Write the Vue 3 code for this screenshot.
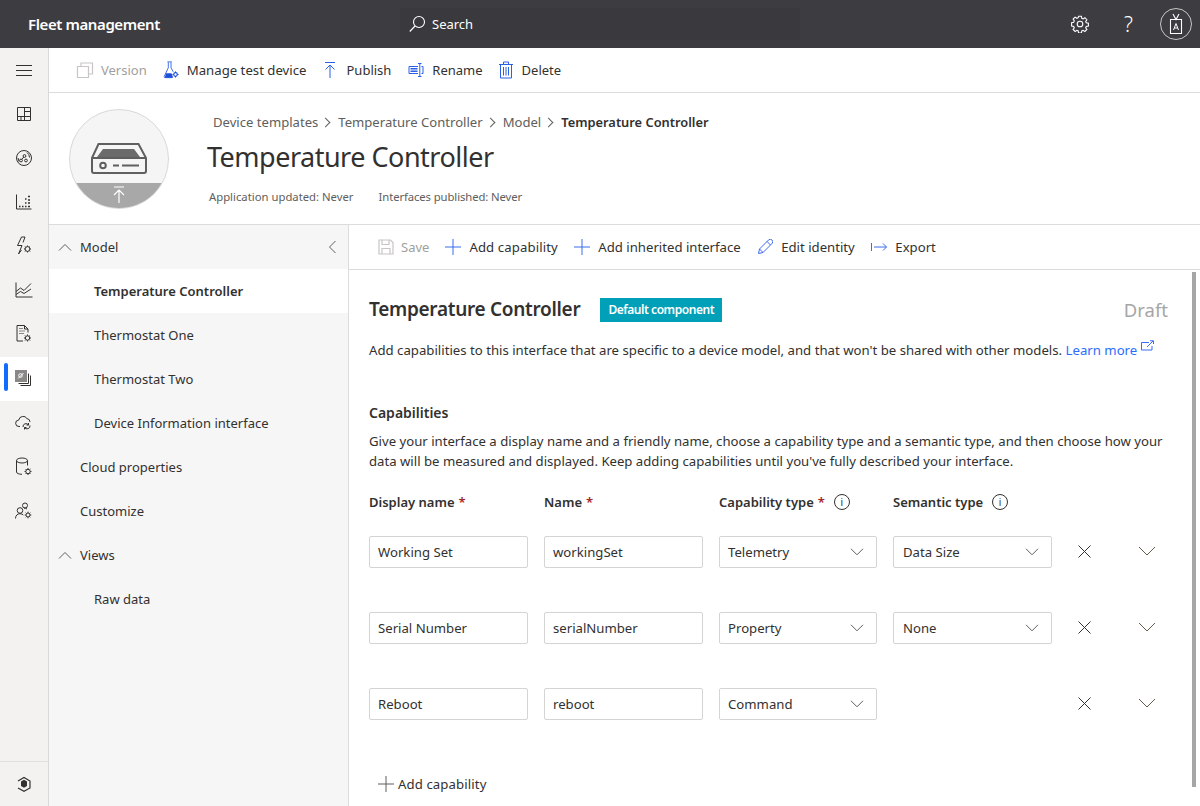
<script setup>
const navItems = [
  { label: 'Model', chev: true, cls: 'top', collapse: true },
  { label: 'Temperature Controller', cls: 'sub selected' },
  { label: 'Thermostat One', cls: 'sub' },
  { label: 'Thermostat Two', cls: 'sub' },
  { label: 'Device Information interface', cls: 'sub' },
  { label: 'Cloud properties', cls: 'top' },
  { label: 'Customize', cls: 'top' },
  { label: 'Views', chev: true, cls: 'top' },
  { label: 'Raw data', cls: 'sub' },
]
const rows = [
  { display: 'Working Set', name: 'workingSet', cap: 'Telemetry', sem: 'Data Size' },
  { display: 'Serial Number', name: 'serialNumber', cap: 'Property', sem: 'None' },
  { display: 'Reboot', name: 'reboot', cap: 'Command', sem: '' },
]
</script>

<template>
  <div class="app">
    <header class="topbar">
      <div class="brand">Fleet management</div>
      <div class="search">
        <svg width="20" height="20" viewBox="0 0 20 20" fill="none" stroke="#fff" stroke-width="1.100"><circle cx="10" cy="8" r="5.500"/><path d="M6 12 .8 17.500"/></svg>
        <span>Search</span>
      </div>
      <div class="top-actions">
        <svg class="gear" width="18" height="18" viewBox="0 0 18 18" fill="none" stroke="#fff" stroke-width="1.100"><path d="M7.600 1.200h2.800l.4 2.100 1.300.6 1.800-1.200 2 2-1.200 1.800.6 1.300 2.100.4v2.800l-2.100.4-.6 1.300 1.200 1.800-2 2-1.800-1.200-1.300.6-.4 2.100H7.600l-.4-2.100-1.300-.6-1.800 1.200-2-2 1.200-1.800-.6-1.300-2.100-.4V7.600l2.100-.4.6-1.300-1.200-1.800 2-2 1.800 1.200 1.300-.6z"/><circle cx="9" cy="9" r="2.800"/></svg>
        <span class="help">?</span>
        <div class="avatar">
          <svg width="16" height="22" viewBox="0 0 16 22" fill="none" stroke="#fff" stroke-width="1.100"><path d="M2.500 6.500h11v14h-11zM5 1l3 5.500L11 1"/><path d="M5.500 17 8 10.500 10.500 17M6.400 15h3.200" stroke-width="1"/></svg>
        </div>
      </div>
    </header>

    <div class="body">
      <aside class="rail">
        <div class="rail-top">
          <button class="rail-btn menu"><svg width="18" height="12" viewBox="0 0 18 12" stroke="#323130" stroke-width="1"><path d="M1 1.500h16M1 6.500h16M1 11.500h16"/></svg></button>
          <button class="rail-btn"><svg width="16" height="16" viewBox="0 0 16 16" fill="none" stroke="#323130"><path d="M1.500 1.500h13v13h-13zM1.500 10.500h13M8.500 1.500v13M8.500 5.500h6M5 10.500v4"/></svg></button>
          <button class="rail-btn"><svg width="18" height="18" viewBox="0 0 18 18" fill="none" stroke="#323130"><circle cx="9" cy="9" r="7.500"/><circle cx="6" cy="11.500" r="1.400"/><circle cx="9.500" cy="7" r="1.400"/><circle cx="11" cy="11.500" r="1.400"/><path d="M7 10.300 8.700 8M12 3.500a6 6 0 0 1 2.500 5M4 12.500 3 9"/></svg></button>
          <button class="rail-btn"><svg width="18" height="16" viewBox="0 0 18 16" fill="none" stroke="#323130"><path d="M1.500 .5v14.500h15"/><path d="M4 12.500h1.500M7 12.500h1.500M10 12.500h1.500M13 12.500h2M10 9h1.500M13 9h2M13 6h2M10 5h1.500M13 2.500h2" stroke-width="1.600"/></svg></button>
          <button class="rail-btn"><svg width="18" height="20" viewBox="0 0 18 20" fill="none" stroke="#323130"><path d="M6.500 1 2.500 9.500H7L3.500 18 6.500 14M6.500 1H10L8 6.500"/><circle cx="12.500" cy="13" r="2.400"/><path d="M12.500 9.500v1.200M12.500 15.300v1.200M9 13h1.200M14.800 13H16M10 10.500l.9.9M14.100 14.600l.9.900M10 15.500l.9-.9M14.100 11.400l.9-.9"/></svg></button>
          <button class="rail-btn"><svg width="18" height="16" viewBox="0 0 18 16" fill="none" stroke="#323130"><path d="M1 .5v14.500h16.500"/><path d="M1 9.500 5.500 6l3.500 2.500L16 1.500M1 12.500 5.500 9.500l3.500 2 7-4.500"/></svg></button>
          <button class="rail-btn"><svg width="18" height="20" viewBox="0 0 18 20" fill="none" stroke="#323130"><path d="M8 17H2V1.500h7.500L13 5v3.500M9.500 1.500V5H13"/><path d="M4 4.500h4M4 7h6M4 9.500h5" stroke="#8a8886"/><circle cx="12.500" cy="14" r="2.200"/><path d="M12.500 10.500v1.200M12.500 16.300v1.200M9 14h1.200M14.800 14H16M10 11.500l.9.9M14.100 15.600l.9.900M10 16.500l.9-.9M14.100 12.400l.9-.9"/></svg></button>
          <button class="rail-btn active"><span class="active-bar"></span><svg width="18" height="18" viewBox="0 0 18 18" fill="none" stroke="#323130"><rect x=".5" y=".5" width="11" height="11" fill="#8a8886" stroke="#8a8886"/><path d="M3 8.500 8.500 3" stroke="#fff"/><circle cx="5.500" cy="5.500" r="1.800" stroke="#fff"/><path d="M13.500 3.500v10h-10M15.500 5.500v10h-10"/></svg></button>
          <button class="rail-btn"><svg width="18" height="16" viewBox="0 0 18 16" fill="none" stroke="#323130"><path d="M5 11.500H4a3.200 3.200 0 0 1-.3-6.400A4.500 4.500 0 0 1 12 3.600a3.500 3.500 0 0 1 3 3.400"/><path d="M8 12a3 3 0 0 1 5.500-2M15 10.500a3 3 0 0 1-5.500 2M13.500 8v2h-2M9.500 14.500v-2h2"/></svg></button>
          <button class="rail-btn"><svg width="18" height="20" viewBox="0 0 18 20" fill="none" stroke="#323130"><ellipse cx="7" cy="3.500" rx="5.500" ry="2.500"/><path d="M1.500 3.500v11.500c0 1.300 2.500 2.300 5.500 2.300M12.500 3.500v5"/><circle cx="13" cy="14.500" r="2.200"/><path d="M13 11v1.200M13 16.800V18M9.500 14.500h1.200M15.300 14.500h1.200M10.500 12l.9.9M14.600 16.100l.9.9M10.500 17l.9-.9M14.600 12.900l.9-.9"/></svg></button>
          <button class="rail-btn"><svg width="18" height="18" viewBox="0 0 18 18" fill="none" stroke="#323130"><circle cx="10" cy="3.500" r="2.500"/><circle cx="5" cy="8.500" r="2.800"/><path d="M.500 16.500c0-3 2-4.800 4.500-4.800 1.500 0 2.500.5 3.300 1.300M12 7a4 4 0 0 0-3-.8"/><circle cx="13" cy="13" r="2"/><path d="M13 9.700v1.200M13 15.100v1.200M9.700 13h1.200M15.100 13h1.200M10.700 10.700l.8.800M14.500 14.500l.8.800M10.700 15.300l.8-.8M14.500 11.500l.8-.8"/></svg></button>
        </div>
        <div class="rail-bottom">
          <svg width="16" height="18" viewBox="0 0 16 18" fill="none" stroke="#323130" stroke-width="1.200"><path d="M2 6 8 2.500l6 3.500v7L8 16.300 2 13"/><path d="M5 6.500 8 4.800 11 6.500v4.500L8 12.800 5 11z" fill="#323130" stroke="none"/></svg>
        </div>
      </aside>

      <main class="main">
        <div class="cmdbar">
          <span class="cmd disabled">
            <svg width="18" height="18" viewBox="0 0 18 18" fill="none" stroke="#c8c6c4" stroke-width="1.200"><path d="M1.500 5.500h11v11h-11zM5 5.500V2h11.500v11H12.500"/></svg>Version
          </span>
          <span class="cmd wide">
            <svg width="16" height="18" viewBox="0 0 18 20" fill="none" stroke="#2b5fe8"><path d="M5 1h5M6 1.500v6L1.500 17c-.3.800 0 1.500 1 1.500H10M9 1.500v6l2.500 4.500" /><path d="M3.500 13.500h6l2 5H2z" fill="#1f4fd8" stroke="none"/><circle cx="14" cy="15" r="2" stroke="#1f4fd8" stroke-width="1.300"/><path d="M14 11.500v1.500M14 17v1.500M10.500 15H12M16 15h1.500" stroke="#1f4fd8"/></svg>Manage test device
          </span>
          <span class="cmd">
            <svg width="14" height="18" viewBox="0 0 14 18" fill="none" stroke="#2b5fe8"><path d="M2 1.500h10M7 17V4M2.500 8.500 7 4l4.500 4.500"/></svg>Publish
          </span>
          <span class="cmd rename">
            <svg width="16" height="14" viewBox="0 0 16 14" fill="none" stroke="#2b5fe8"><path d="M10 3.500H1v7h9M13.500 3.500H15v7h-1.500"/><path d="M2.500 5.500h7M2.500 7h7M2.500 8.500h7" stroke-width="1"/><path d="M10 .5h3.500M11.800 .5v13M10 13.500h3.500"/></svg>Rename
          </span>
          <span class="cmd">
            <svg width="16" height="18" viewBox="0 0 16 18" fill="none" stroke="#2b5fe8"><path d="M1 3.500h14M5.500 3.500V1h5v2.500M2.500 3.500V17h11V3.500M5.500 6v8.500M8 6v8.500M10.500 6v8.500"/></svg>Delete
          </span>
        </div>

        <div class="identity">
          <div class="badge-circle">
            <svg class="drive" width="56" height="31" viewBox="0 0 56 31" fill="none" stroke="#5f5f5f" stroke-width="2"><path d="M1 15 7.500 1h40L55 15v13a2 2 0 0 1-2 2H3a2 2 0 0 1-2-2z"/><path d="M1 15h54"/><path d="M6 14l6-8h31l6 8z" fill="#6b6b6b" stroke="none"/><circle cx="12" cy="22.500" r="2.800"/><path d="M22 22.500h6M31 22.500h17"/></svg>
            <div class="circle-band">
              <svg width="14" height="18" viewBox="0 0 14 18" fill="none" stroke="#fff" stroke-width="1.200"><path d="M2 1h10M7 17V4M2 9l5-5 5 5"/></svg>
            </div>
          </div>
          <div class="identity-text">
            <nav class="crumbs">
              <span>Device templates</span><i class="sep"></i><span>Temperature Controller</span><i class="sep"></i><span>Model</span><i class="sep"></i><b>Temperature Controller</b>
            </nav>
            <h1>Temperature Controller</h1>
            <div class="meta"><span>Application updated: Never</span><span class="tight">Interfaces published: Never</span></div>
          </div>
        </div>

        <div class="split">
          <aside class="nav">
            <div v-for="item in navItems" :key="item.label" class="nav-row" :class="item.cls">
              <svg v-if="item.chev" class="nav-chev" width="14" height="8" viewBox="0 0 14 8" fill="none" stroke="#605e5c"><path d="M1 7.500 7 1.500l6 6"/></svg>
              <span>{{ item.label }}</span>
              <svg v-if="item.collapse" class="nav-collapse" width="8" height="14" viewBox="0 0 8 14" fill="none" stroke="#605e5c"><path d="M7.500 1 1.500 7l6 6"/></svg>
            </div>
          </aside>

          <section class="pane">
            <div class="toolbar">
              <span class="cmd disabled">
                <svg width="16" height="16" viewBox="0 0 16 16" fill="none" stroke="#c8c6c4" stroke-width="1.200"><path d="M1 1h11.500L15 3.500V15H1zM4 1v4.500h7V1M4 15V9.500h8V15"/></svg>Save
              </span>
              <span class="cmd spaced">
                <svg width="16" height="16" viewBox="0 0 16 16" stroke="#3b6cf0" stroke-width="1"><path d="M0 8h16M8 0v16"/></svg>Add capability
              </span>
              <span class="cmd">
                <svg width="16" height="16" viewBox="0 0 16 16" stroke="#3b6cf0" stroke-width="1"><path d="M0 8h16M8 0v16"/></svg>Add inherited interface
              </span>
              <span class="cmd">
                <svg width="16" height="16" viewBox="0 0 16 16" fill="none" stroke="#3b6cf0"><path d="M1.500 14.500 2.500 10 11.500 1a1.500 1.500 0 0 1 3.500 3.500L6 13.500zM10 2.500l3.500 3.500M2.500 10l3.500 3.500"/></svg>Edit identity
              </span>
              <span class="cmd">
                <svg width="16" height="10" viewBox="0 0 16 10" fill="none" stroke="#3b6cf0"><path d="M.500 1v8M3 5h12.500M12 1.500 15.500 5 12 8.500"/></svg>Export
              </span>
            </div>

            <div class="content">
              <div class="content-scroll">
                <div class="title-row">
                  <h2>Temperature Controller</h2>
                  <span class="tag">Default component</span>
                  <span class="draft">Draft</span>
                </div>
                <p class="intro">Add capabilities to this interface that are specific to a device model, and that won't be shared with other models. <a>Learn more</a><svg class="ext" width="14" height="12" viewBox="0 0 14 12" fill="none" stroke="#3b6cf0"><path d="M8 2.500H.500v7.500h10.500V6M6 7l6-6M9 .800h3.500V4"/></svg></p>

                <h3>Capabilities</h3>
                <p class="desc">Give your interface a display name and a friendly name, choose a capability type and a semantic type, and then choose how your data will be measured and displayed. Keep adding capabilities until you've fully described your interface.</p>

                <div class="grid head">
                  <label>Display name <em>*</em></label>
                  <label>Name <em>*</em></label>
                  <label>Capability type <em>*</em><i class="info">i</i></label>
                  <label>Semantic type<i class="info">i</i></label>
                </div>

                <div v-for="r in rows" :key="r.name" class="grid row">
                  <div class="field">{{ r.display }}</div>
                  <div class="field">{{ r.name }}</div>
                  <div class="field select">{{ r.cap }}<svg width="14" height="8" viewBox="0 0 14 8" fill="none" stroke="#605e5c"><path d="M1 .8 7 6.800l6-6"/></svg></div>
                  <div v-if="r.sem" class="field select sem">{{ r.sem }}<svg width="14" height="8" viewBox="0 0 14 8" fill="none" stroke="#605e5c"><path d="M1 .8 7 6.800l6-6"/></svg></div>
                  <div v-else></div>
                  <svg class="x" width="13" height="13" viewBox="0 0 13 13" fill="none" stroke="#323130"><path d="M.500.500l12 12M12.500.500l-12 12"/></svg>
                  <svg class="expand" width="18" height="10" viewBox="0 0 18 10" fill="none" stroke="#665c4e"><path d="M1 1l8 8 8-8"/></svg>
                </div>

                <div class="add-line">
                  <svg width="16" height="16" viewBox="0 0 16 16" stroke="#605e5c" stroke-width="1"><path d="M0 8h16M8 0v16"/></svg>Add capability
                </div>
              </div>
              <div class="scrollbar"></div>
            </div>
          </section>
        </div>
      </main>
    </div>
  </div>
</template>

<style>
html, body { margin: 0; padding: 0; overflow: hidden; }
</style>

<style scoped>
.app {
  width: 1200px;
  height: 806px;
  display: flex;
  flex-direction: column;
  overflow: hidden;
  font-family: "Noto Sans", "Open Sans", sans-serif;
  font-size: 13.170px;
  color: #323130;
  background: #fff;
}
.topbar {
  height: 48px;
  flex: none;
  background: #3d3c41;
  color: #fff;
  display: flex;
  align-items: center;
  padding-left: 28px;
}
.brand { width: 372px; font-size: 15px; font-weight: 600; letter-spacing: -0.4px; margin-top: -1px; }
.search {
  width: 400px;
  height: 32px;
  box-sizing: border-box;
  padding-left: 9px;
  display: flex;
  align-items: center;
  gap: 3px;
  border-radius: 2px;
  background: #3a393e;
  font-size: 13px;
}
.top-actions { margin-left: auto; display: flex; align-items: center; }
.gear { margin-right: 35px; }
.help { font-size: 21px; width: 10px; margin-right: 26px; font-weight: 300; line-height: 1; }
.avatar {
  width: 30px; height: 30px; border: 1px solid #c8c6c4; border-radius: 50%;
  display: flex; align-items: center; justify-content: center; margin-right: 8px;
}
.body { flex: 1; display: flex; min-height: 0; }
.rail {
  width: 48px; flex: none; background: #f3f2f1; border-right: 1px solid #d9d9d9;
  display: flex; flex-direction: column; justify-content: space-between;
}
.rail-top { display: flex; flex-direction: column; }
.rail-btn {
  position: relative; width: 48px; height: 44px; padding: 0; border: 0; background: none;
  display: flex; align-items: center; justify-content: center;
}
.rail-btn.active { background: #fff; margin-top: 1px; }
.active-bar {
  position: absolute; left: 4px; top: 6px; width: 4px; height: 28px; border-radius: 2px; background: #0f6cff;
}
.rail-bottom {
  height: 44px; border-top: 1px solid #e1dfdd; display: flex; align-items: center; justify-content: center;
}
.main { flex: 1; min-width: 0; display: flex; flex-direction: column; }
.cmdbar {
  height: 44px; flex: none; border-bottom: 1px solid #dcdcdc; font-size: 13px;
  display: flex; align-items: center; padding-left: 27px; gap: 15px;
}
.cmdbar svg { width: 18px; }
.cmd { display: inline-flex; align-items: center; gap: 7px; white-space: nowrap; }
.cmd.wide { font-size: 13.200px; }
.cmd.rename { margin-left: 1px; margin-right: -1px; }
.cmd.disabled { color: #a19f9d; font-size: 13px; }
.identity {
  height: 132px; flex: none; border-bottom: 1px solid #dcdcdc; box-sizing: border-box;
  display: flex; padding: 16px 0 0 20px;
}
.badge-circle {
  position: relative; width: 100px; height: 100px; box-sizing: border-box; border-radius: 50%;
  background: #f5f5f5; border: 1px solid #d9d9d9; overflow: hidden; flex: none;
}
.drive { position: absolute; left: 21px; top: 33px; }
.circle-band {
  position: absolute; left: 0; right: 0; bottom: 0; height: 25px; background: #a8a8a8;
  display: flex; justify-content: center; padding-top: 3px; box-sizing: border-box;
}
.identity-text { margin-left: 38px; }
.crumbs { display: flex; align-items: center; margin: 0 0 0 6px; height: 18px; padding-top: 4px; color: #605e5c; font-size: 13.100px; }
.crumbs b { font-weight: 600; color: #323130; font-size: 12.850px; }
.sep {
  width: 6px; height: 6px; border-top: 1px solid #605e5c; border-right: 1px solid #605e5c;
  transform: rotate(45deg); margin: 0 9px 0 4px;
}
h1 { margin: 8px 0 0; font-size: 27px; font-weight: 400; line-height: 36px; color: #323130; letter-spacing: -0.500px; }
.meta { display: flex; gap: 25px; margin: 14px 0 0 2px; font-size: 11.300px; color: #605e5c; }
.tight { letter-spacing: -0.100px; }
.split { flex: 1; display: flex; min-height: 0; }
.nav { width: 299px; flex: none; background: #f6f6f6; border-right: 1px solid #dcdcdc; font-size: 13px; }
.nav-row { position: relative; height: 44px; display: flex; align-items: center; }
.nav-row.top { padding-left: 31px; }
.nav-row.sub { padding-left: 45px; }
.nav-row.selected { background: #fff; font-weight: 600; }
.nav-chev { position: absolute; left: 9px; top: 18px; }
.nav-collapse { position: absolute; right: 12px; top: 15px; }
.pane { flex: 1; min-width: 0; display: flex; flex-direction: column; }
.toolbar {
  height: 44px; flex: none; border-bottom: 1px solid #dcdcdc; display: flex; align-items: center; padding-left: 29px; gap: 16px;
}
.toolbar .cmd { gap: 8.500px; }
.toolbar .cmd.disabled { gap: 7px; margin-right: -0.500px; }
.toolbar .cmd.spaced { letter-spacing: 0.110px; }
.content { flex: 1; display: flex; min-height: 0; position: relative; }
.content-scroll { flex: 1; padding: 0 31px 0 20px; min-width: 0; }
.scrollbar { position: absolute; right: 4px; top: 2px; width: 4px; height: 515px; background: #a6a6a6; }
.title-row { display: flex; align-items: center; height: 24px; margin-top: 27px; }
h2 { margin: 0; font-size: 19px; font-weight: 600; color: #323130; letter-spacing: -0.3px; }
.tag { margin-left: 20px; margin-top: 2px; background: #00a0b8; color: #fff; font-size: 12px; font-weight: 600; padding: 0 8px; line-height: 24px; height: 24px; letter-spacing: -0.450px; }
.draft { margin-left: auto; font-size: 18.500px; color: #a6a6a6; margin-right: 1px; }
.intro { margin: 19px 0 0; line-height: 18px; white-space: nowrap; font-size: 13.200px; }
.intro a { color: #2b6cff; }
.ext { margin-left: 4px; vertical-align: 3px; }
h3 { margin: 44px 0 0; font-size: 14px; font-weight: 600; line-height: 20px; }
.desc { margin: 8px 0 0; line-height: 20px; }
.grid { display: grid; grid-template-columns: 159px 159px 158px 159px 66px 30px; column-gap: 16px; align-items: center; }
.head { height: 20px; margin-top: 21px; font-size: 13px; }
.head label { font-weight: 600; white-space: nowrap; display: flex; align-items: center; }
.head em { color: #a4262c; font-style: normal; margin-left: 4px; }
.info {
  width: 14px; height: 14px; border: 1px solid #323130; border-radius: 50%; margin-left: 9px;
  font-style: normal; font-weight: 400; font-size: 10px; line-height: 14px; text-align: center;
}
.row { height: 32px; margin-bottom: 44px; }
.head + .row { margin-top: 24px; }
.field {
  height: 32px; box-sizing: border-box; border: 1px solid #d4d4d4; border-radius: 2px; padding-left: 8px;
  display: flex; align-items: center; justify-content: space-between; padding-right: 12px;
}
.field.sem { padding-left: 9px; }
.x { justify-self: start; margin-left: 10px; margin-top: -2px; }
.expand { justify-self: start; margin-top: -3px; margin-left: -12px; }
.add-line { display: flex; align-items: center; gap: 4px; margin: 55px 0 0 9px; letter-spacing: 0.110px; }
</style>
